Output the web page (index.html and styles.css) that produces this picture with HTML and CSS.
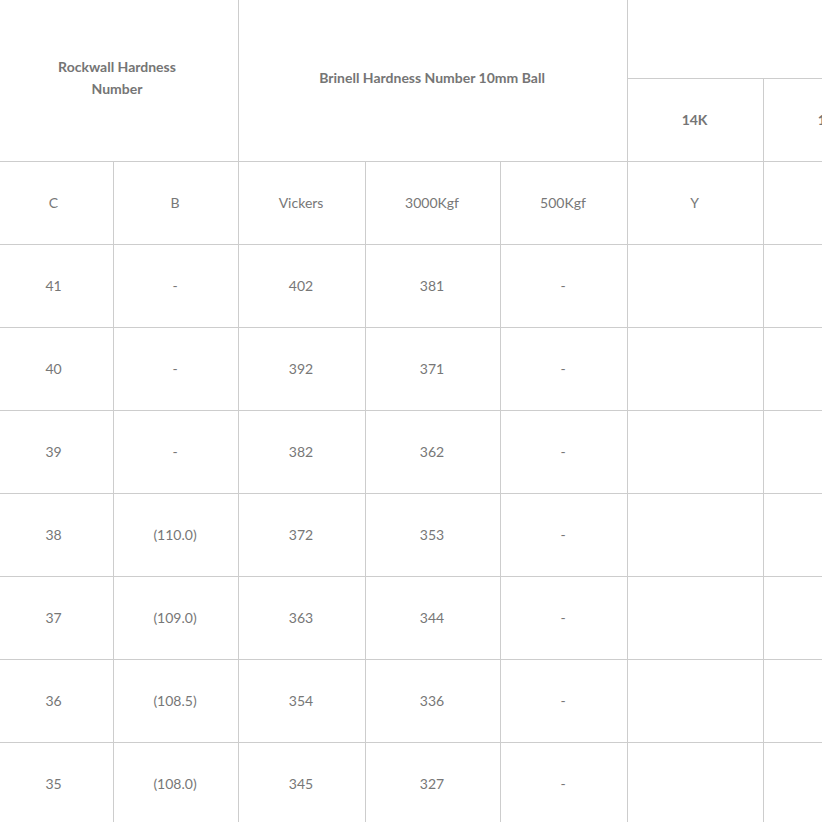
FILE: index.html
```html
<!DOCTYPE html>
<html lang="en">
<head>
<meta charset="utf-8">
<title>Hardness Conversion Table</title>
<link rel="stylesheet" href="styles.css">
</head>
<body>
<div class="wrap">
<table class="hardness">
  <colgroup>
    <col class="c0"><col class="c1"><col class="c2"><col class="c3"><col class="c4"><col class="c5"><col class="c6"><col class="c7"><col class="c8">
  </colgroup>
  <thead>
    <tr class="h1">
      <th colspan="2" rowspan="2" class="wide">Rockwall Hardness Number</th>
      <th colspan="3" rowspan="2" class="group">Brinell Hardness Number 10mm Ball</th>
      <th colspan="4" class="karat">&nbsp;</th>
    </tr>
    <tr class="h2">
      <th>14K</th>
      <th>18K</th>
      <th>22K</th>
      <th>24K</th>
    </tr>
  </thead>
  <tbody>
    <tr><td class="first">C</td><td>B</td><td>Vickers</td><td>3000Kgf</td><td>500Kgf</td><td>Y</td><td></td><td></td><td></td></tr>
    <tr><td class="first">41</td><td>-</td><td>402</td><td>381</td><td>-</td><td></td><td></td><td></td><td></td></tr>
    <tr><td class="first">40</td><td>-</td><td>392</td><td>371</td><td>-</td><td></td><td></td><td></td><td></td></tr>
    <tr><td class="first">39</td><td>-</td><td>382</td><td>362</td><td>-</td><td></td><td></td><td></td><td></td></tr>
    <tr><td class="first">38</td><td>(110.0)</td><td>372</td><td>353</td><td>-</td><td></td><td></td><td></td><td></td></tr>
    <tr><td class="first">37</td><td>(109.0)</td><td>363</td><td>344</td><td>-</td><td></td><td></td><td></td><td></td></tr>
    <tr><td class="first">36</td><td>(108.5)</td><td>354</td><td>336</td><td>-</td><td></td><td></td><td></td><td></td></tr>
    <tr><td class="first">35</td><td>(108.0)</td><td>345</td><td>327</td><td>-</td><td></td><td></td><td></td><td></td></tr>
    <tr><td class="first">34</td><td>(107.5)</td><td>336</td><td>319</td><td>-</td><td></td><td></td><td></td><td></td></tr>
  </tbody>
</table>
</div>
</body>
</html>
```
FILE: styles.css
```css
html, body {
  margin: 0;
  padding: 0;
  background: #fff;
}
.wrap {
  width: 822px;
  height: 822px;
  overflow: hidden;
}
.hardness {
  table-layout: fixed;
  border-collapse: separate;
  border-spacing: 0;
  width: 1172px;
  font-family: Lato, "Open Sans", sans-serif;
  font-size: 14px;
  line-height: 22px;
  color: #777;
}
.c0 { width: 114px; }
.c1 { width: 125px; }
.c2 { width: 127px; }
.c3 { width: 135px; }
.c4 { width: 127px; }
.c5 { width: 136px; }
.c6 { width: 136px; }
.c7 { width: 136px; }
.c8 { width: 136px; }
.hardness th,
.hardness td {
  border-right: 1px solid #cdcdcd;
  border-bottom: 1px solid #cdcdcd;
  text-align: center;
  vertical-align: middle;
  padding: 0 9px 0 7px;
  box-sizing: border-box;
}
.hardness th {
  font-weight: 700;
  color: #757575;
}
.hardness th.wide {
  padding: 0 40px 6px 36px;
}
.hardness th.group {
  padding-bottom: 6px;
}
.hardness td.first {
  padding: 0 11px 0 5px;
}
.h1 { height: 79px; }
.h2 { height: 83px; }
.hardness tbody tr { height: 83px; }
.hardness td {
  font-weight: 400;
}
```
